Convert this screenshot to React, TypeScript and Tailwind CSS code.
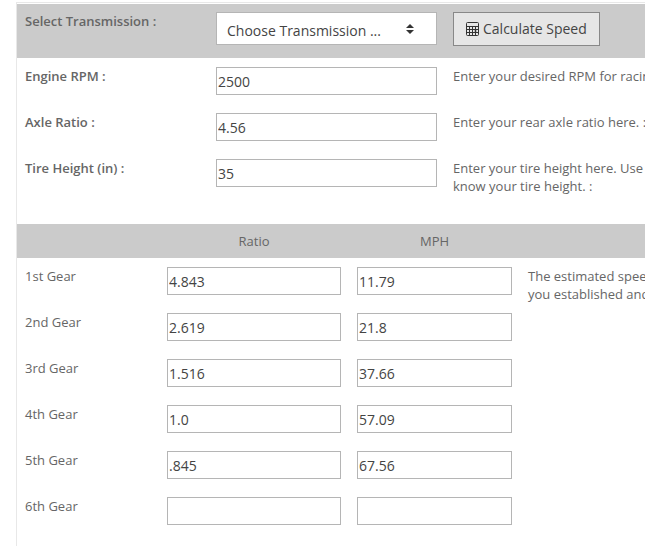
import { useState } from 'react'

const SETTINGS = [
  { id: 'rpm', label: 'Engine RPM :', value: '2500', help: ['Enter your desired RPM for racing'] },
  { id: 'axle', label: 'Axle Ratio :', value: '4.56', help: ['Enter your rear axle ratio here. :'] },
  {
    id: 'tire',
    label: 'Tire Height (in) :',
    value: '35',
    help: ['Enter your tire height here. Use', 'know your tire height. :'],
  },
]

const GEARS = [
  { name: '1st Gear', ratio: '4.843', mph: '11.79' },
  { name: '2nd Gear', ratio: '2.619', mph: '21.8' },
  { name: '3rd Gear', ratio: '1.516', mph: '37.66' },
  { name: '4th Gear', ratio: '1.0', mph: '57.09' },
  { name: '5th Gear', ratio: '.845', mph: '67.56' },
  { name: '6th Gear', ratio: '', mph: '' },
]

const fieldClass =
  'block h-7 w-full border border-[#b5b5b5] bg-white pl-px text-sm text-[#444] outline-none'

function CalculatorIcon() {
  return (
    <svg width="13" height="14" viewBox="0 0 13 14" fill="none" stroke="#333" aria-hidden="true">
      <rect x="0.5" y="0.5" width="12" height="13" rx="1" />
      <path d="M1 4.5h11M1 7.5h11M1 10.5h11M3.5 4.5V13M6.5 4.5V13M9.5 4.5V13" />
      <path d="M9.5 7.5V11" strokeWidth="1.5" />
    </svg>
  )
}

function SortArrows() {
  return (
    <svg
      width="8"
      height="10"
      viewBox="0 0 8 10"
      fill="#333"
      className="pointer-events-none absolute top-3 right-[23px]"
      aria-hidden="true"
    >
      <path d="M4 0l4 4H0zM4 10L0 6h8z" />
    </svg>
  )
}

function SettingRow({ id, label, value, help }: (typeof SETTINGS)[number]) {
  const [text, setText] = useState(value)
  return (
    <div className="grid min-h-[46px] grid-cols-[191px_237px_1fr] items-start pt-[9px]">
      <label htmlFor={id} className="px-2 font-semibold">
        {label}
      </label>
      <div className="px-2">
        <input id={id} value={text} onChange={(e) => setText(e.target.value)} className={fieldClass} />
      </div>
      <p className="px-2 whitespace-nowrap">
        {help.map((line) => (
          <span key={line} className="block">
            {line}
          </span>
        ))}
      </p>
    </div>
  )
}

export default function App() {
  return (
    <main className="overflow-hidden bg-white pt-0.5 pl-4 font-['Open_Sans',sans-serif] text-[13px] leading-[18px] text-[#666]">
      <form
        onSubmit={(e) => e.preventDefault()}
        className="border-t border-l border-[#e8e8e8] pb-8"
      >
        {/* Transmission picker */}
        <div className="mt-px grid grid-cols-[191px_237px_1fr] items-start bg-[#cbcbcb] pt-2 pb-3">
          <label htmlFor="transmission" className="px-2 font-semibold">
            Select Transmission :
          </label>
          <div className="px-2">
            <div className="relative">
              <select
                id="transmission"
                className="block h-[33px] w-full appearance-none border border-[#b5b5b5] bg-white pt-1 pl-2.5 text-sm text-[#444]"
              >
                <option>Choose Transmission ...</option>
              </select>
              <SortArrows />
            </div>
          </div>
          <div className="px-2">
            <button
              type="submit"
              className="flex h-[34px] items-center gap-1 border border-[#888] bg-[#e6e6e6] px-3 text-sm whitespace-nowrap text-[#444]"
            >
              <CalculatorIcon />
              Calculate Speed
            </button>
          </div>
        </div>

        {SETTINGS.map((setting) => (
          <SettingRow key={setting.id} {...setting} />
        ))}

        {/* Speed per gear */}
        <table className="mt-7 w-full table-fixed border-collapse">
          <colgroup>
            <col className="w-[142px]" />
            <col className="w-[190px]" />
            <col className="w-[171px]" />
            <col />
          </colgroup>
          <thead>
            <tr className="h-[34px] bg-[#cbcbcb]">
              <td />
              <th className="font-normal">Ratio</th>
              <th className="font-normal">MPH</th>
              <td />
            </tr>
          </thead>
          <tbody>
            {GEARS.map((gear, i) => (
              <tr key={gear.name} className="h-[46px] align-top">
                <th className="px-2 pt-[9px] text-left font-normal">{gear.name}</th>
                <td className="px-2 pt-[9px]">
                  <input aria-label={`${gear.name} ratio`} defaultValue={gear.ratio} className={fieldClass} />
                </td>
                <td className="px-2 pt-[9px]">
                  <input aria-label={`${gear.name} MPH`} defaultValue={gear.mph} className={fieldClass} />
                </td>
                {i === 0 && (
                  <td rowSpan={GEARS.length} className="px-2 pt-[9px] whitespace-nowrap">
                    The estimated speed
                    <br />
                    you established and
                  </td>
                )}
              </tr>
            ))}
          </tbody>
        </table>
      </form>
    </main>
  )
}
